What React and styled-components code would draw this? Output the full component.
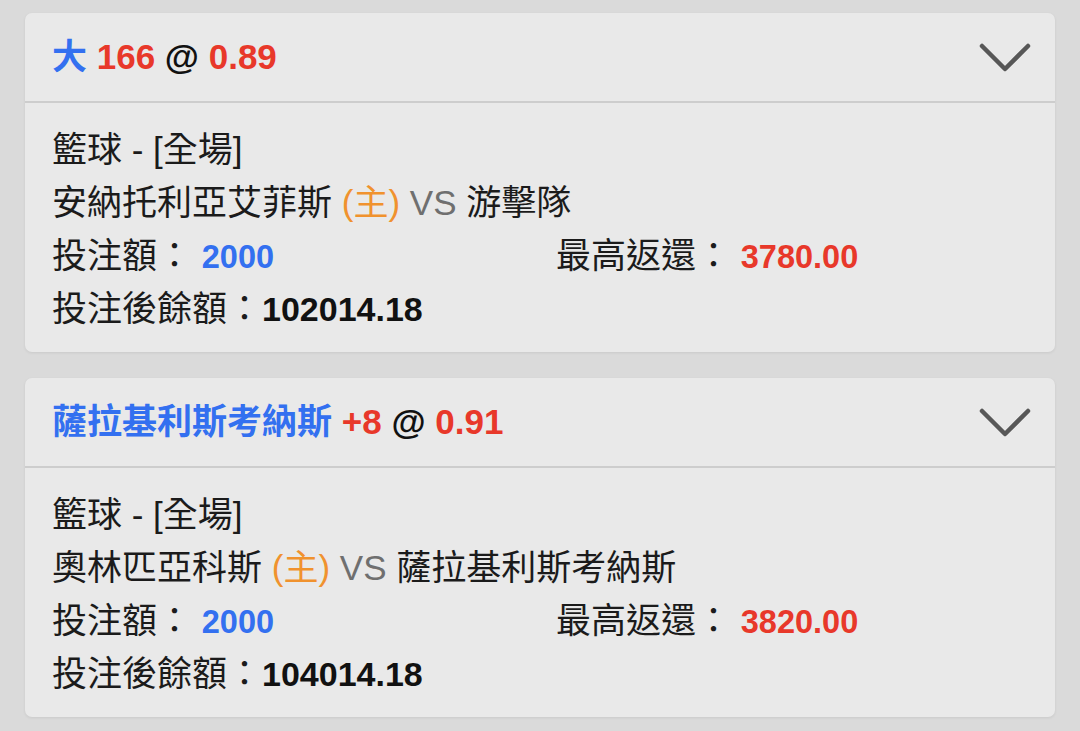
import React from "react";
import styled, { createGlobalStyle } from "styled-components";

const Global = createGlobalStyle`
  html, body { margin: 0; padding: 0; background: #dadada; }
  body { font-family: "Liberation Sans", "Noto Sans CJK TC", sans-serif; color: #1b1b1b; }
`;

const Page = styled.div`
  display: flex;
  flex-direction: column;
  gap: 26px;
  padding: 13px 25px 14px 25px;
`;

const Card = styled.div`
  background: #e9e9e9;
  border-radius: 7px;
  box-shadow: 0 1px 3px rgba(0,0,0,0.08);
  overflow: hidden;
`;

const Header = styled.div`
  height: 90px;
  box-sizing: border-box;
  display: flex;
  align-items: center;
  justify-content: space-between;
  padding: 0 24px 8px 27px;
  border-bottom: 2px solid #cdcdcd;
  font-size: 35px;
  font-weight: bold;
  white-space: pre;
`;

const Part = styled.span`
  color: ${p => p.$c};
`;

const ChevronWrap = styled.span`
  display: flex;
  margin-top: 10px;
`;

const Body = styled.div`
  padding: 20px 27px 17px 27px;
  font-size: 35px;
  line-height: 53px;
`;

const Line = styled.div`
  height: 53px;
  white-space: pre;
`;

const Grid = styled.div`
  height: 53px;
  display: grid;
  grid-template-columns: 504px auto;
  white-space: pre;
`;

const Num = styled.span`
  font-weight: bold;
  font-size: ${p => p.$size || 32.5}px;
  color: ${p => p.$c || "#111"};
`;

const Home = styled.span`color: #f0922e;`;
const Vs = styled.span`color: #6f6f6f;`;

const Chevron = () => (
  <ChevronWrap>
    <svg width="52" height="32" viewBox="0 0 52 32">
      <polyline points="3,4 26,27 49,4" fill="none" stroke="#575757" strokeWidth="4.5" strokeLinecap="round" strokeLinejoin="round" />
    </svg>
  </ChevronWrap>
);

const bets = [
  {
    title: [["大 ", "#3370f0"], ["166 ", "#e8382a"], ["@ ", "#111"], ["0.89", "#e8382a"]],
    home: "安納托利亞艾菲斯",
    away: "游擊隊",
    stake: "2000",
    ret: "3780.00",
    bal: "102014.18",
  },
  {
    title: [["薩拉基利斯考納斯 ", "#3370f0"], ["+8 ", "#e8382a"], ["@ ", "#111"], ["0.91", "#e8382a"]],
    home: "奧林匹亞科斯",
    away: "薩拉基利斯考納斯",
    stake: "2000",
    ret: "3820.00",
    bal: "104014.18",
  },
];

export default function App() {
  return (
    <>
      <Global />
      <Page>
        {bets.map((b, i) => (
          <Card key={i}>
            <Header>
              <span>
                {b.title.map(([t, c], j) => (
                  <Part key={j} $c={c}>{t}</Part>
                ))}
              </span>
              <Chevron />
            </Header>
            <Body>
              <Line>籃球 - [全場]</Line>
              <Line>
                {b.home} <Home>(主)</Home> <Vs>VS</Vs> {b.away}
              </Line>
              <Grid>
                <span>投注額： <Num $c="#3370f0">{b.stake}</Num></span>
                <span>最高返還： <Num $c="#e8382a">{b.ret}</Num></span>
              </Grid>
              <Line>
                投注後餘額：<Num $size={34}>{b.bal}</Num>
              </Line>
            </Body>
          </Card>
        ))}
      </Page>
    </>
  );
}
